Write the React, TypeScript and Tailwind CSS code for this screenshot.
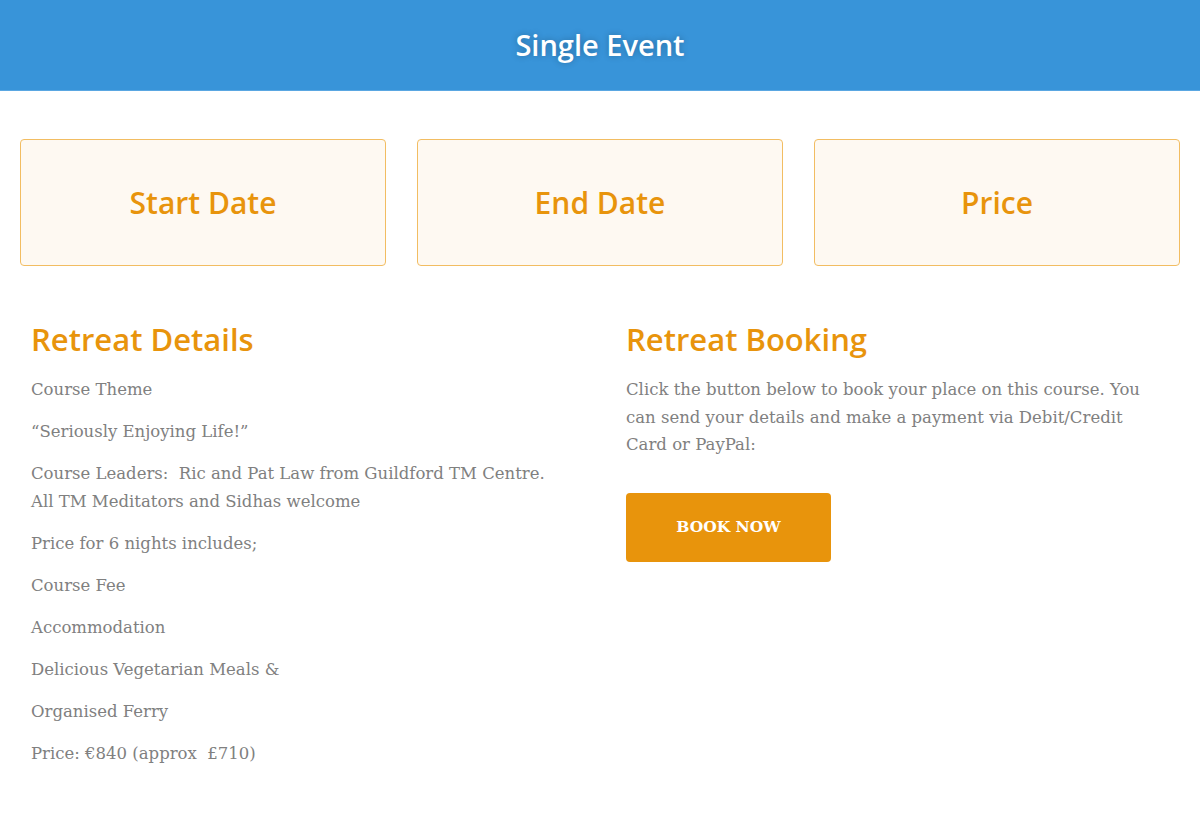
import React from "react";

const head = { fontFamily: "'Open Sans', Lato, sans-serif" };
const body = { fontFamily: "'DejaVu Serif', 'Liberation Serif', serif" };

function Card({ label }: { label: string }) {
  return (
    <div className="h-[127px] rounded-[4px] border border-[#f2bd62] bg-[#fef9f2] flex items-center justify-center">
      <span className="text-[30px] font-semibold text-[#e8940c]" style={head}>
        {label}
      </span>
    </div>
  );
}

export default function App() {
  return (
    <div className="min-h-[826px] bg-white">
      <header className="h-[91px] bg-[#3894d9] border-b border-[#5aa7e2] flex items-center justify-center">
        <h1
          className="text-[29px] font-semibold text-white [text-shadow:0_0_6px_rgba(0,0,0,0.25)]"
          style={head}
        >
          Single Event
        </h1>
      </header>

      <div className="px-5 pt-[48px]">
        <div className="grid grid-cols-3 gap-[31px]">
          <Card label="Start Date" />
          <Card label="End Date" />
          <Card label="Price" />
        </div>

        <div className="grid grid-cols-[595px_1fr] pt-[55px]">
          <div className="pl-[11px] pr-4">
            <h2 className="text-[31px] font-semibold text-[#e8940c] leading-[36px] mb-[19px]" style={head}>
              Retreat Details
            </h2>
            <div className="text-[16.5px] leading-[28px] text-[#808080] flex flex-col gap-[14px]" style={body}>
              <p>Course Theme</p>
              <p>“Seriously Enjoying Life!”</p>
              <p>
                Course Leaders:&nbsp; Ric and Pat Law from Guildford TM Centre.
                <br />
                All TM Meditators and Sidhas welcome
              </p>
              <p>Price for 6 nights includes;</p>
              <p>Course Fee</p>
              <p>Accommodation</p>
              <p>Delicious Vegetarian Meals &amp;</p>
              <p>Organised Ferry</p>
              <p>Price: €840 (approx&nbsp; £710)</p>
            </div>
          </div>
          <div className="pl-[11px] pr-[20px]">
            <h2 className="text-[31px] font-semibold text-[#e8940c] leading-[36px] mb-[19px]" style={head}>
              Retreat Booking
            </h2>
            <p className="text-[16.5px] leading-[27.5px] text-[#808080] max-w-[535px]" style={body}>
              Click the button below to book your place on this course. You can send your details and make a payment via Debit/Credit Card or PayPal:
            </p>
            <button
              className="mt-[34px] w-[205px] h-[69px] rounded-[4px] bg-[#e8940c] text-white text-[15.5px] font-bold"
              style={body}
            >
              BOOK NOW
            </button>
          </div>
        </div>
      </div>
    </div>
  );
}
